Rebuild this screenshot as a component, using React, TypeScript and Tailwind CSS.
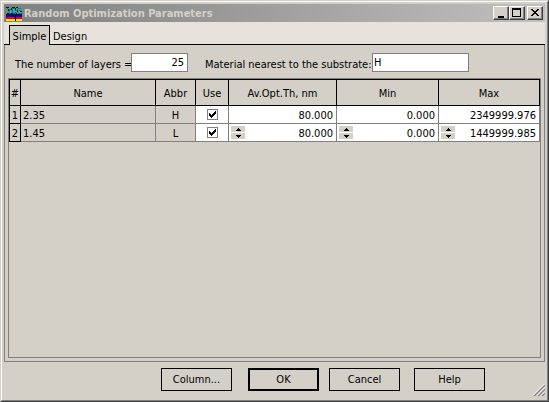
import React from "react";

const raised =
  "flex h-[14px] w-4 items-center justify-center border border-t-white border-l-white border-r-[#404040] border-b-[#404040] bg-[#d4d0c8] shadow-[inset_-1px_-1px_0_#808080]";

const actionButton = "h-[23px] w-[71px] border border-black bg-[#d4d0c8] text-center";

const headCell = "border-r border-b border-black px-0 pt-0.5 pb-0 text-center font-normal";
const cell = "border-r border-b border-[#808080]";

const rows = [
  { id: 1, name: "2.35", abbr: "H", av: "80.000", min: "0.000", max: "2349999.976", spin: false },
  { id: 2, name: "1.45", abbr: "L", av: "80.000", min: "0.000", max: "1449999.985", spin: true },
];

function AppIcon() {
  return (
    <svg className="mt-0.5" width="16" height="14" viewBox="0 0 16 14" shapeRendering="crispEdges" aria-hidden="true">
      <path fill="#101818" d="M0 0h3v1H0zM6 0h3v1H6zM10 0h2v1h-2zM2 2h1v2H2zM5 1h1v2H5zM9 1h1v2H9zM11 3h1v2h-1zM1 6h2v1H1zM5 6h2v1H5zM10 6h1v1h-1zM14 4h2v1h-2zM0 7h16v1H0z" />
      <path fill="#008080" d="M1 1h2v1H1zM3 2h2v5H3zM7 1h2v1H7zM6 1h1v5H6zM9 3h1v3H9zM7 6h3v1H7zM12 1h3v1h-3zM11 2h1v1h-1zM13 3h2v1h-2zM12 5h1v1h-1zM12 6h4v1h-4z" />
      <path fill="#00d0d0" d="M2 1h2v1H2zM4 3h1v3H4zM7 2h2v1H7zM8 4h2v1H8zM13 2h2v1h-2zM12 4h2v1h-2zM13 5h2v1h-2z" />
      <path fill="#0000f0" d="M0 8h16v2H0z" />
      <path fill="#f00000" d="M0 10h16v2H0z" />
      <path fill="#ffee00" d="M0 12h16v2H0z" />
      <path fill="#000" d="M9 8h1v6H9z" />
    </svg>
  );
}

function Spinner({ label }: { label: string }) {
  return (
    <span className="ml-0.5 flex shrink-0 flex-col gap-px">
      <button aria-label={`Increase ${label}`} className="flex h-1.5 w-3.5 items-center justify-center bg-[#d4d0c8]">
        <svg width="5" height="3" viewBox="0 0 5 3" shapeRendering="crispEdges"><path d="M2 0h1v1h1v1h1v1H0V2h1V1h1z" /></svg>
      </button>
      <button aria-label={`Decrease ${label}`} className="flex h-1.5 w-3.5 items-center justify-center bg-[#d4d0c8]">
        <svg width="5" height="3" viewBox="0 0 5 3" shapeRendering="crispEdges"><path d="M0 0h5v1H4v1H3v1H2V2H1V1H0z" /></svg>
      </button>
    </span>
  );
}

function NumberCell({ value, label, spin }: { value: string; label: string; spin: boolean }) {
  return (
    <td className={`${cell} bg-white p-0`}>
      <div className="flex h-[17px] items-center">
        {spin && <Spinner label={label} />}
        <input aria-label={label} defaultValue={value} className="h-[17px] w-full min-w-0 bg-transparent pt-0.5 pr-[3px] text-right outline-none" />
      </div>
    </td>
  );
}

export default function App() {
  return (
    <div className="flex min-h-screen flex-col border border-t-[#d4d0c8] border-r-[#404040] border-b-[#404040] border-l-[#d4d0c8] bg-[#d4d0c8] font-['DejaVu_Sans_Condensed','Noto_Sans',sans-serif] text-[11px] leading-[14px] text-black">
      <div className="flex flex-1 flex-col border border-t-white border-r-[#808080] border-b-[#808080] border-l-white p-0.5">
        <header className="flex h-[18px] items-center bg-linear-to-r from-[#808080] to-[#c0c0c0] px-0.5">
          <AppIcon />
          <h1 className="ml-0.5 flex-1 pt-0.5 font-bold whitespace-nowrap text-[#d4d0c8]">Random Optimization Parameters</h1>
          <div className="flex">
            <button aria-label="Minimize" className={raised}>
              <svg width="12" height="10" viewBox="0 0 12 10" shapeRendering="crispEdges"><path d="M3 8h6v2H3z" /></svg>
            </button>
            <button aria-label="Maximize" className={raised}>
              <svg width="12" height="10" viewBox="0 0 12 10" shapeRendering="crispEdges"><path fillRule="evenodd" d="M1 0h9v9H1zM2 2v6h7V2z" /></svg>
            </button>
            <button aria-label="Close" className={`${raised} ml-0.5`}>
              <svg width="12" height="10" viewBox="0 0 12 10" shapeRendering="crispEdges"><path d="M2 1h2v1h1v1h2V2h1V1h2v1H9v1H8v1H7v1h1v1h1v1h1v1H8V7H7V6H5v1H4v1H2V7h1V6h1V5h1V4H4V3H3V2H2z" /></svg>
            </button>
          </div>
        </header>

        <div role="tablist" className="flex h-[23px] items-end border-b border-black bg-[#e7e3dc] pl-[5px]">
          <button role="tab" aria-selected="true" className="-mb-px h-5 w-[41px] border border-b-0 border-black bg-[#d4d0c8] pt-0.5">Simple</button>
          <button role="tab" aria-selected="false" className="h-[19px] px-[3px] pt-1">Design</button>
        </div>

        <main className="flex flex-1 flex-col border border-t-0 border-[#808080] p-[3px] pt-2">
          <div className="mb-1.5 flex items-center pl-[7px] whitespace-nowrap">
            <label htmlFor="layers" className="w-[116px] pt-1">The number of layers =</label>
            <input id="layers" defaultValue="25" className="h-[19px] w-[57px] border border-[#808080] bg-white px-[3px] text-right outline-none" />
            <label htmlFor="material" className="ml-[17px] w-[167px] pt-1">Material nearest to the substrate:</label>
            <input id="material" defaultValue="H" className="h-[19px] w-[97px] border border-[#808080] bg-white px-px outline-none" />
          </div>

          <div className="flex-1 border border-[#808080]">
            <table className="w-full table-fixed border-separate border-spacing-0 border-t border-l border-black">
              <colgroup>
                <col className="w-[11px]" />
                <col />
                <col className="w-10" />
                <col className="w-[33px]" />
                <col className="w-[108px]" />
                <col className="w-[102px]" />
                <col className="w-[101px]" />
              </colgroup>
              <thead>
                <tr className="h-[26px]">
                  <th className={headCell}>#</th>
                  <th className={headCell}>Name</th>
                  <th className={headCell}>Abbr</th>
                  <th className={headCell}>Use</th>
                  <th className={headCell}>Av.Opt.Th, nm</th>
                  <th className={headCell}>Min</th>
                  <th className={headCell}>Max</th>
                </tr>
              </thead>
              <tbody>
                {rows.map((r) => (
                  <tr key={r.id} className="h-[18px]">
                    <th className={headCell}>{r.id}</th>
                    <td className={`${cell} pt-0.5 pr-0 pb-0 pl-0.5`}>{r.name}</td>
                    <td className={`${cell} px-0 pt-0.5 pb-0 text-center`}>{r.abbr}</td>
                    <td className={`${cell} bg-white p-0`}>
                      <label className="relative mx-auto block h-[11px] w-[11px]">
                        <input type="checkbox" defaultChecked aria-label={`Use ${r.name}`} className="peer block h-[11px] w-[11px] appearance-none border border-[#808080] bg-white" />
                        <svg className="pointer-events-none absolute top-0.5 left-0.5 hidden peer-checked:block" width="7" height="7" viewBox="0 0 7 7" shapeRendering="crispEdges" aria-hidden="true">
                          <path d="M0 2h1v1h1v1h1V3h1V2h1V1h1V0h1v3H6v1H5v1H4v1H3v1H2V6H1V5H0z" />
                        </svg>
                      </label>
                    </td>
                    <NumberCell value={r.av} label={`Average optical thickness of ${r.name}`} spin={r.spin} />
                    <NumberCell value={r.min} label={`Minimum of ${r.name}`} spin={r.spin} />
                    <NumberCell value={r.max} label={`Maximum of ${r.name}`} spin={r.spin} />
                  </tr>
                ))}
              </tbody>
            </table>
          </div>
        </main>

        <footer className="flex h-9 items-start justify-end pt-1.5">
          <button className={actionButton}>Column...</button>
          <button className={`${actionButton} ml-4 outline-1 -outline-offset-2 outline-black`}>OK</button>
          <button className={`${actionButton} ml-2.5`}>Cancel</button>
          <button className={`${actionButton} ml-3.5`}>Help</button>
          <svg className="mb-0.5 ml-12 self-end" width="12" height="12" viewBox="0 0 12 12" aria-hidden="true">
            <path stroke="#808080" strokeWidth="1.5" d="M1 12L12 1M5 12L12 5M9 12L12 9" />
            <path stroke="#fff" d="M0 11.5L11.5 0M4 11.5L12 3.5M8 11.5L12 7.5" />
          </svg>
        </footer>
      </div>
    </div>
  );
}
